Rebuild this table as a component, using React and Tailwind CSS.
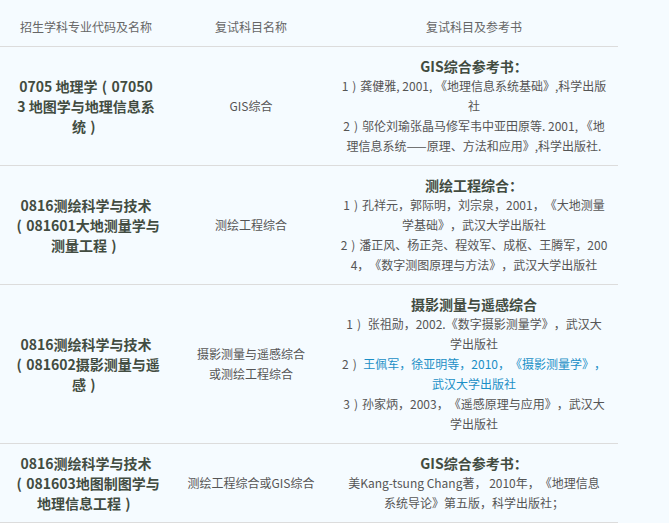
const font = {
  fontFamily: '"Noto Sans CJK SC", "Microsoft YaHei", sans-serif',
};

// the screenshot's font centres the full-width parens in their box
function fix(text) {
  return text.split(/([（）])/).map((part, i) =>
    part === "（" || part === "）" ? (
      <span key={i} className="inline-block w-[1em] text-center">
        {part === "（" ? "(" : ")"}
      </span>
    ) : (
      part
    )
  );
}

function Row({ major, subject, children }) {
  return (
    <div className="grid grid-cols-[172px_158px_288px] border-b border-[#dcdcdc]">
      <div className="flex flex-col items-center justify-center py-[9px] text-[14px] font-bold leading-5 text-[#424c41] whitespace-nowrap">
        {major.map((l, i) => (
          <div key={i}>{fix(l)}</div>
        ))}
      </div>
      <div className="flex flex-col items-center justify-center py-[9px] text-[12px] leading-5 text-[#555] whitespace-nowrap">
        {subject.map((l, i) => (
          <div key={i}>{l}</div>
        ))}
      </div>
      <div className="flex flex-col items-center py-[9px] text-[12px] leading-5 text-[#555] whitespace-nowrap">
        {children}
      </div>
    </div>
  );
}

function Title({ children }) {
  return <div className="text-[14px] font-bold text-[#424c41]">{children}</div>;
}

export default function App() {
  return (
    <div className="min-h-screen w-full bg-[#f5fbff] [text-spacing-trim:space-all]" style={font}>
      <div className="w-[618px]">
        {/* header */}
        <div className="grid grid-cols-[172px_158px_288px] border-b border-[#dcdcdc] pt-[17px] pb-[9px] text-[12px] leading-5 text-[#666]">
          <div className="text-center">招生学科专业代码及名称</div>
          <div className="text-center">复试科目名称</div>
          <div className="text-center">复试科目及参考书</div>
        </div>

        <Row
          major={["0705 地理学（07050", "3 地图学与地理信息系", "统）"]}
          subject={["GIS综合"]}
        >
          <Title>GIS综合参考书：</Title>
          <div>{fix("1）龚健雅, 2001, 《地理信息系统基础》,科学出版")}</div>
          <div>社</div>
          <div>{fix("2）邬伦刘瑜张晶马修军韦中亚田原等. 2001, 《地")}</div>
          <div>理信息系统——原理、方法和应用》,科学出版社.</div>
        </Row>

        <Row
          major={["0816测绘科学与技术", "（081601大地测量学与", "测量工程）"]}
          subject={["测绘工程综合"]}
        >
          <Title>测绘工程综合：</Title>
          <div>{fix("1）孔祥元，郭际明，刘宗泉，2001，《大地测量")}</div>
          <div>学基础》，武汉大学出版社</div>
          <div>{fix("2）潘正风、杨正尧、程效军、成枢、王腾军，200")}</div>
          <div>4，《数字测图原理与方法》，武汉大学出版社</div>
        </Row>

        <Row
          major={["0816测绘科学与技术", "（081602摄影测量与遥", "感）"]}
          subject={["摄影测量与遥感综合", "或测绘工程综合"]}
        >
          <Title>摄影测量与遥感综合</Title>
          <div>{fix("1） 张祖勋，2002.《数字摄影测量学》，武汉大")}</div>
          <div>学出版社</div>
          <div>
            {fix("2） ")}
            <span className="text-[#1b8fc6]">王佩军，徐亚明等，2010，《摄影测量学》，</span>
          </div>
          <div className="text-[#1b8fc6]">武汉大学出版社</div>
          <div>{fix("3）孙家炳，2003，《遥感原理与应用》，武汉大")}</div>
          <div>学出版社</div>
        </Row>

        <Row
          major={["0816测绘科学与技术", "（081603地图制图学与", "地理信息工程）"]}
          subject={["测绘工程综合或GIS综合"]}
        >
          <Title>GIS综合参考书：</Title>
          <div>美Kang-tsung Chang著， 2010年，《地理信息</div>
          <div>系统导论》第五版，科学出版社；</div>
        </Row>
      </div>
    </div>
  );
}
